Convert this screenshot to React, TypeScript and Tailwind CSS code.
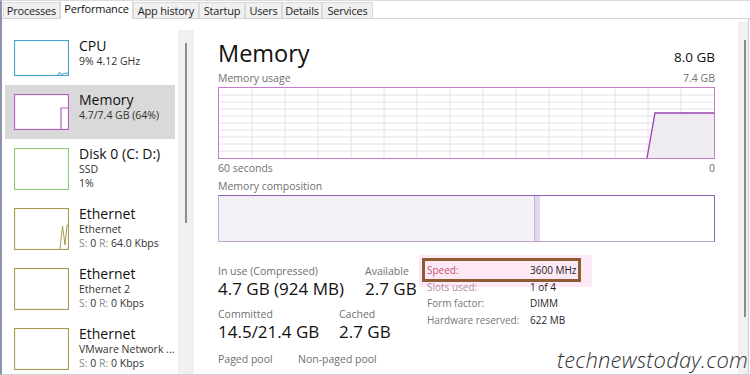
import React from 'react';

const tabs = [
  { label: 'Processes', w: 'w-[57px]' },
  { label: 'Performance', w: 'w-[73px]', active: true },
  { label: 'App history', w: 'w-[66px]' },
  { label: 'Startup', w: 'w-[46px]' },
  { label: 'Users', w: 'w-[37px]' },
  { label: 'Details', w: 'w-[40px]' },
  { label: 'Services', w: 'w-[51px]' },
];

function TabBar() {
  return (
    <div className="h-[18px] flex items-end border-b border-b-[#d4d4d4] pl-px shrink-0">
      {tabs.map((t) =>
        t.active ? (
          <div
            key={t.label}
            className={`${t.w} h-[18px] -mb-px bg-white border-l border-r border-[#d9d9d9] text-[11px] leading-[14px] text-center tracking-[-0.2px] pt-[1px] text-[#111]`}
          >
            {t.label}
          </div>
        ) : (
          <div
            key={t.label}
            className={`${t.w} h-[16px] bg-[#f0f0f0] border-l border-r border-t border-[#d9d9d9] text-[11px] leading-[14px] text-center tracking-[-0.2px] pt-[1px] text-[#222]`}
          >
            {t.label}
          </div>
        )
      )}
    </div>
  );
}

type Item = {
  name: string;
  lines: React.ReactNode[];
  color: string;
  big: boolean;
  selected?: boolean;
  kind: 'cpu' | 'mem' | 'none' | 'eth';
};

const Gray = ({ children }: { children: React.ReactNode }) => (
  <span className="text-[#8a8a8a]">{children}</span>
);

const items: Item[] = [
  { name: 'CPU', lines: ['9% 4.12 GHz'], color: '#47a3c7', big: false, kind: 'cpu' },
  { name: 'Memory', lines: ['4.7/7.4 GB (64%)'], color: '#b85cc6', big: false, selected: true, kind: 'mem' },
  { name: 'Disk 0 (C: D:)', lines: ['SSD', '1%'], color: '#8fc97c', big: true, kind: 'none' },
  {
    name: 'Ethernet',
    lines: ['Ethernet', <><Gray>S:</Gray> 0 <Gray>R:</Gray> 64.0 Kbps</>],
    color: '#a99b52',
    big: true,
    kind: 'eth',
  },
  {
    name: 'Ethernet',
    lines: ['Ethernet 2', <><Gray>S:</Gray> 0 <Gray>R:</Gray> 0 Kbps</>],
    color: '#a99b52',
    big: true,
    kind: 'none',
  },
  {
    name: 'Ethernet',
    lines: ['VMware Network ...', <><Gray>S:</Gray> 0 <Gray>R:</Gray> 0 Kbps</>],
    color: '#a99b52',
    big: true,
    kind: 'none',
  },
];

function Thumb({ item }: { item: Item }) {
  const h = item.big ? 42 : 36;
  return (
    <svg width="55" height={h} className="shrink-0 block">
      <rect x="0.5" y="0.5" width="54" height={h - 1} fill="white" stroke={item.color} strokeWidth="1.2" />
      {item.kind === 'cpu' && (
        <polyline points={`44,${h - 1} 45.5,${h - 4} 47,${h - 1.5} 50,${h - 2.5} 54,${h - 3}`} fill="none" stroke={item.color} strokeWidth="1" />
      )}
      {item.kind === 'mem' && (
        <polyline points={`47,${h - 1} 47,14 54,14`} fill="none" stroke={item.color} strokeWidth="1.2" />
      )}
      {item.kind === 'eth' && (
        <polyline points={`46,${h - 1} 48.5,18 51,37 53,17 54,17`} fill="none" stroke={item.color} strokeWidth="1" />
      )}
    </svg>
  );
}

function LeftList() {
  return (
    <div className="w-[176px] shrink-0 pt-[12px] pl-[3px] flex flex-col">
      {items.map((it, i) => (
        <div
          key={i}
          className={`w-[170px] flex items-start py-[9px] pl-[9px] gap-[10px] ${it.selected ? 'bg-[#d9d9d9]' : ''}`}
        >
          <Thumb item={it} />
          <div className="-mt-[2.5px] flex flex-col">
            <div className="text-[14px] leading-[16px] text-[#111] whitespace-nowrap">{it.name}</div>
            {it.lines.map((l, j) => (
              <div key={j} className="text-[10.5px] leading-[14px] text-[#333] whitespace-nowrap">
                {l}
              </div>
            ))}
          </div>
        </div>
      ))}
    </div>
  );
}

function LeftScroll() {
  return (
    <div className="w-[16px] shrink-0 mt-[11px] bg-[#f0f0f0] pt-[13px] pl-[7px]">
      <div className="w-[2px] h-[180px] bg-[#8c8c8c]" />
    </div>
  );
}

function UsageGraph() {
  const W = 495;
  const H = 70;
  const vs = Array.from({ length: 14 }, (_, i) => (i + 1) * (W / 15));
  const hs = Array.from({ length: 9 }, (_, i) => (i + 1) * (H / 10));
  return (
    <div className="h-[72px] border border-[#c57ccd] mt-[2px]">
      <svg width={W} height={H} className="block">
        {hs.map((y) => (
          <line key={'h' + y} x1="0" x2={W} y1={y} y2={y} stroke="#e6dfea" strokeWidth="1" />
        ))}
        {vs.map((x) => (
          <line key={'v' + x} x1={x} x2={x} y1="0" y2={H} stroke="#e6dfea" strokeWidth="1" />
        ))}
        <polygon points={`428,${H} 436,25 ${W},25 ${W},${H}`} fill="#efecf1" />
        <polyline points={`428,${H} 436,25 ${W},25`} fill="none" stroke="#9a3fae" strokeWidth="1.3" />
      </svg>
    </div>
  );
}

function CompositionBar() {
  return (
    <div className="h-[47px] mt-[2px] flex border-t border-r border-t-[#8a63b5] border-r-[#8a63b5] border-b border-b-[#bca6d1] border-l border-l-[#c1aad5]">
      <div className="w-[315px] bg-[#f3f0f6]" />
      <div className="w-[6px] bg-[#e2d7ec] border-l border-[#c6b4d8]" />
      <div className="flex-1 bg-white" />
    </div>
  );
}

function Stat({ label, value, w }: { label: string; value: string; w?: string }) {
  return (
    <div className={`${w ?? ''} shrink-0`}>
      <div className="text-[10.5px] leading-[13px] text-[#707070] whitespace-nowrap">{label}</div>
      <div className="text-[17px] leading-[22px] text-[#111] whitespace-nowrap">{value}</div>
    </div>
  );
}

function RightPanel() {
  const rows = [
    { l: 'Speed:', v: '3600 MHz', c: 'text-[#c65571]' },
    { l: 'Slots used:', v: '1 of 4', c: 'text-[#b5889c]' },
    { l: 'Form factor:', v: 'DIMM', c: 'text-[#777777]' },
    { l: 'Hardware reserved:', v: '622 MB', c: 'text-[#777777]' },
  ];
  return (
    <div className="w-[544px] shrink-0 pl-[24px] pr-[23px] pt-[20px] flex flex-col">
      <div className="flex items-baseline justify-between h-[28px]">
        <div className="text-[23.5px] leading-[28px] text-[#111]">Memory</div>
        <div className="text-[13.5px] leading-[28px] text-[#111]">8.0 GB</div>
      </div>
      <div className="mt-[5px] flex justify-between text-[10.5px] leading-[13px] text-[#707070]">
        <span>Memory usage</span>
        <span>7.4 GB</span>
      </div>
      <UsageGraph />
      <div className="mt-[3px] flex justify-between text-[10.5px] leading-[13px] text-[#707070]">
        <span>60 seconds</span>
        <span>0</span>
      </div>
      <div className="mt-[5px] text-[10.5px] leading-[13px] text-[#707070]">Memory composition</div>
      <CompositionBar />
      <div className="mt-[20px] flex items-start">
        <div className="w-[209px] shrink-0 pt-[3px] flex flex-col">
          <div className="flex">
            <Stat label="In use (Compressed)" value="4.7 GB (924 MB)" w="w-[147px]" />
            <Stat label="Available" value="2.7 GB" />
          </div>
          <div className="flex mt-[8px]">
            <Stat label="Committed" value="14.5/21.4 GB" w="w-[121px]" />
            <Stat label="Cached" value="2.7 GB" />
          </div>
          <div className="flex mt-[10px] text-[10.5px] leading-[13px] text-[#707070]">
            <span className="w-[80px] shrink-0 whitespace-nowrap">Paged pool</span>
            <span className="whitespace-nowrap">Non-paged pool</span>
          </div>
        </div>
        <div className="relative flex flex-col">
          <div className="absolute left-[-8px] top-[-7px] w-[173px] h-[32px] bg-[#fde8f6]" />
          {rows.map((r) => (
            <div key={r.l} className="relative flex text-[10px] leading-[16.5px]">
              <span className={`w-[103px] shrink-0 whitespace-nowrap ${r.c}`}>{r.l}</span>
              <span className="text-[#1e1e1e] whitespace-nowrap">{r.v}</span>
            </div>
          ))}
          <div className="absolute left-[-5px] top-[-4px] w-[159px] h-[24px] border-[3px] border-[#8f5b31]" />
        </div>
      </div>
    </div>
  );
}

function RightScroll() {
  return (
    <div className="w-[10px] shrink-0 mt-[3px] bg-[#f0f0f0] pt-[18px] pl-[6px]">
      <div className="w-[2px] h-[277px] bg-[#8c8c8c]" />
    </div>
  );
}

export default function App() {
  return (
    <div className="w-[750px] h-[375px] overflow-hidden bg-white relative flex flex-col border-l-2 border-l-[#8a94aa] border-t border-t-[#dcdcdc] border-b border-b-[#cfcfcf] font-['Open_Sans','Noto_Sans',sans-serif] text-[#1a1a1a]">
      <TabBar />
      <div className="flex flex-1 min-h-0">
        <LeftList />
        <LeftScroll />
        <RightPanel />
        <RightScroll />
        <div className="w-px bg-[#cccccc]" />
        <div className="w-px bg-white" />
      </div>
      <div className="absolute left-[555px] top-[344px] text-[22px] leading-[28px] italic font-light text-[#333333] tracking-[0.2px]">
        technewstoday.com
      </div>
    </div>
  );
}
